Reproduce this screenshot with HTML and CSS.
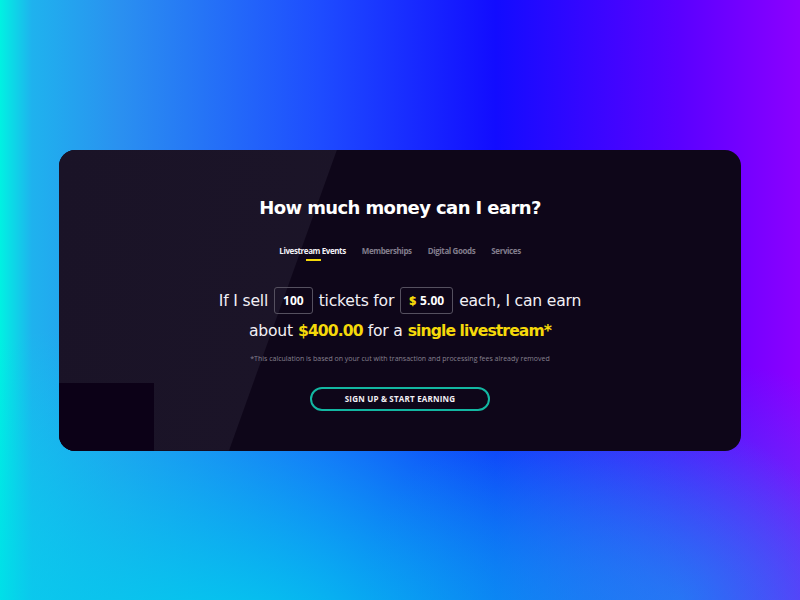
FILE: index.html
```html
<!DOCTYPE html>
<html lang="en">
<head>
    <meta charset="UTF-8">
    <meta name="viewport" content="width=device-width, initial-scale=1.0">
    <title>Earnings Calculator</title>
    <link rel="stylesheet" href="styles.css">
</head>
<body>
    <div class="card">
        <div class="card-inner">
            <h1>How much money can I earn?</h1>

            <div class="tabs">
                <span class="tab active">Livestream Events</span>
                <span class="tab">Memberships</span>
                <span class="tab">Digital Goods</span>
                <span class="tab">Services</span>
            </div>

            <p class="sentence">
                If I sell <span class="field">100</span> tickets for
                <span class="field"><b class="dollar">$</b> 5.00</span> each, I can earn
            </p>
            <p class="sentence">
                about <strong class="hl">$400.00</strong> for a <strong class="hl">single livestream*</strong>
            </p>

            <p class="note">*This calculation is based on your cut with transaction and processing fees already removed</p>

            <button class="cta">SIGN UP &amp; START EARNING</button>
        </div>
    </div>
</body>
</html>
```

FILE: styles.css
```css
html, body {
    height: 100%;
}
body {
    margin: 0;
    display: flex;
    align-items: center;
    justify-content: center;
    font-family: "Open Sans", sans-serif;
    background:
        radial-gradient(ellipse 85% 55% at 28% 108%, rgba(0, 212, 236, 0.95), rgba(0, 200, 236, 0) 100%),
        radial-gradient(ellipse 40% 40% at 85% 100%, rgba(40, 110, 245, 0.7), rgba(40, 110, 245, 0) 100%),
        linear-gradient(90deg, #00f2e2 0%, #1fb2ee 4%, #2a90f0 15%, #1e4cff 40%, #120cff 62%, #5a00ff 85%, #8c00ff 100%);
}
.card {
    position: relative;
    width: 682px;
    height: 301px;
    border-radius: 16px;
    background: #0e0619;
    overflow: hidden;
}
/* lighter diagonal wedge and dark corner block */
.card::before {
    content: "";
    position: absolute;
    inset: 0;
    background: linear-gradient(100deg, #1a1327 0%, #1d1629 100%);
    clip-path: polygon(0 0, 278px 0, 170px 100%, 0 100%);
}
.card::after {
    content: "";
    position: absolute;
    left: 0;
    bottom: 0;
    width: 95px;
    height: 68px;
    background: #0c0117;
}
.card-inner {
    position: relative;
    z-index: 1;
    display: flex;
    flex-direction: column;
    align-items: center;
    padding-top: 46px;
}
h1 {
    margin: 0;
    font-family: "DejaVu Sans", sans-serif;
    font-size: 18px;
    font-weight: bold;
    color: #fff;
    letter-spacing: -0.6px;
    line-height: 24px;
}
.tabs {
    display: flex;
    gap: 16px;
    margin-top: 25px;
}
.tab {
    position: relative;
    font-size: 8px;
    font-weight: 700;
    color: #827d8c;
    line-height: 12px;
    letter-spacing: -0.4px;
}
.tab.active {
    color: #f2f0f5;
}
.tab.active::after {
    content: "";
    position: absolute;
    left: 50%;
    top: 14px;
    width: 15px;
    height: 2px;
    margin-left: -7px;
    background: #f5d90a;
}
.sentence {
    margin: 0;
    font-family: "DejaVu Sans", sans-serif;
    font-size: 15.6px;
    color: #f2f0f5;
    line-height: 30px;
    display: flex;
    align-items: center;
    gap: 5px;
    letter-spacing: -0.2px;
}
.sentence:first-of-type {
    margin-top: 29px;
}
.field {
    display: inline-flex;
    align-items: center;
    justify-content: center;
    height: 25px;
    padding: 0 8px;
    margin: 0 1px;
    border: 1px solid #55505f;
    border-radius: 3px;
    font-family: "Open Sans", sans-serif;
    font-size: 12px;
    font-weight: 700;
    color: #fff;
    letter-spacing: 0;
}
.dollar {
    color: #f5d90a;
    margin-right: 4px;
}
.hl {
    color: #f5d90a;
    letter-spacing: -0.9px;
}
.note {
    margin: 8px 0 0;
    font-size: 7px;
    color: #86818f;
}
.cta {
    margin-top: 24px;
    width: 180px;
    height: 24px;
    border: 2px solid #13b7a2;
    border-radius: 12px;
    background: transparent;
    color: #f2f0f5;
    font-family: "Open Sans", sans-serif;
    font-size: 8px;
    font-weight: 700;
    letter-spacing: 0.2px;
}
```
